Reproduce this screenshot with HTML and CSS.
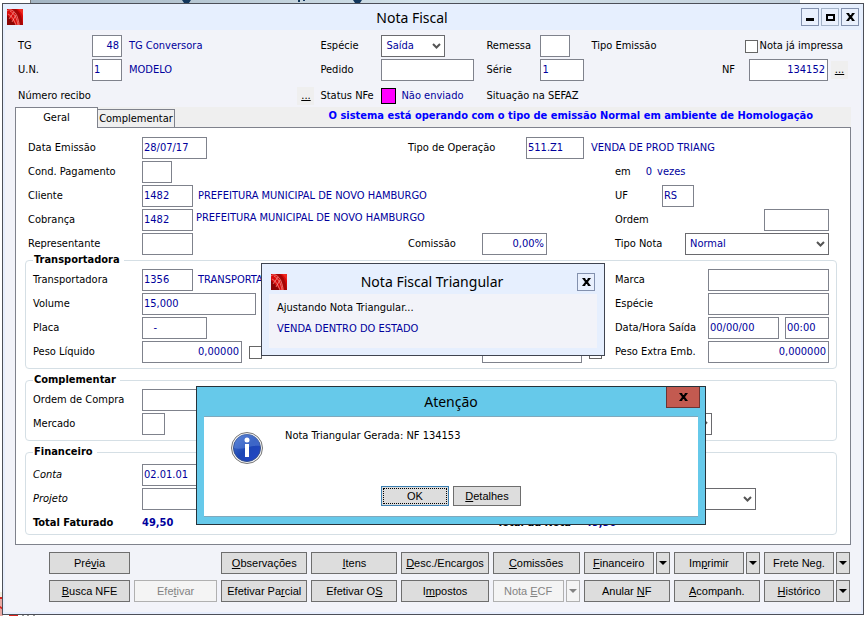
FILE: index.html
```
<!DOCTYPE html>
<html lang="pt-BR">
<head>
  <meta charset="UTF-8" />
  <meta name="viewport" content="width=device-width, initial-scale=1.0"/>
  <title>Nota Fiscal</title>
  <link rel="stylesheet" href="styles.css">
</head>
<body>

  <!-- Desktop behind the window -->
  <div class="desk-top" aria-hidden="true">
    <svg width="400" height="3"><path fill="#12365c" d="M151 0h9l-2 3h-5zM267 0h2v2h-2zM272 0h2v1h-2zM322 0h9l-2 3h-5z"/></svg>
  </div>
  <svg class="desk-logo" width="40" height="24" viewBox="0 0 40 24" aria-hidden="true">
    <path fill="#f3eee0" d="M0 0h3v5H0z"/>
    <path fill="#e8a9a4" d="M0 5h3v19H0z"/>
    <path fill="#d8231d" d="M0 5h3v2H0zM0 14l3 2v2l-3-2zM9 22h9v2H9z"/>
    <path fill="#9a9a9a" d="M22 22h2v2h-2zM27 22h2v2h-2zM33 22h2v2h-2z"/>
  </svg>

  <svg width="0" height="0" class="defs" aria-hidden="true">
    <symbol id="logo" viewBox="0 0 16 16">
      <path fill="#d90b0b" d="M0 0h16v16H0z"/>
      <path fill="#a60606" d="M9 0c4 3 6 8 7 16h-3C12 10 9 5 5 0z"/>
      <path fill="#8a0505" d="M0 6l9 10H0z"/>
      <path fill="#ee2a22" d="M11 0h5v7c-1-3-3-5-5-7z"/>
      <path fill="none" stroke="#f8b3ab" stroke-width=".6" d="M0 2c3-3 8 0 10 5 1 3 2 6 2 9M3 2c5 3 7 8 8 14M1 5c4 2 6 6 8 11M2 10l5-7M5 13l4-7"/>
    </symbol>
  </svg>

  <main class="window">
    <header class="titlebar">
      <svg class="logo"><use href="#logo"/></svg>
      <h1>Nota Fiscal</h1>
      <div class="win-buttons">
        <button aria-label="Minimizar"><svg width="10" height="10"><path d="M1 6h8v3H1z"/></svg></button>
        <button class="light" aria-label="Maximizar"><svg width="10" height="10"><path fill-rule="evenodd" d="M1 2h9v7H1zM3 4h5v3H3z"/></svg></button>
        <button aria-label="Fechar"><svg width="10" height="10"><path d="M1 1h3l1 2h1l1-2h3L7 5l3 4H7L6 7H5L4 9H1l3-4z"/></svg></button>
      </div>
    </header>

    <!-- Header fields -->
    <section class="head">
      <label for="tg">TG</label>
      <div class="cell"><input id="tg" class="w30 right" value="48"><output>TG Conversora</output></div>
      <label for="especie">Espécie</label>
      <div class="cell"><select id="especie" class="w64"><option>Saída</option></select></div>
      <label for="remessa">Remessa</label>
      <div class="cell"><input id="remessa" class="w30"></div>
      <div class="cell between"><span>Tipo Emissão</span><label class="check printed"><input type="checkbox">Nota já impressa</label></div>

      <label for="un">U.N.</label>
      <div class="cell"><input id="un" class="w30" value="1"><output>MODELO</output></div>
      <label for="pedido">Pedido</label>
      <div class="cell"><input id="pedido" class="w93"></div>
      <label for="serie">Série</label>
      <div class="cell"><input id="serie" class="w44" value="1"></div>
      <div class="cell nf"><label for="nf">NF</label><input id="nf" class="w79 right" value="134152"><button class="more" aria-label="Buscar NF">...</button></div>

      <span class="low">Número recibo</span>
      <div class="cell low end"><button class="more" aria-label="Buscar recibo">...</button></div>
      <span class="low">Status NFe</span>
      <div class="cell low"><i class="status"></i><output class="near">Não enviado</output></div>
      <span class="low sefaz">Situação na SEFAZ</span>
    </section>

    <!-- Tabs -->
    <div class="tabs">
      <button class="tab active">Geral</button>
      <button class="tab">Complementar</button>
      <strong class="notice">O sistema está operando com o tipo de emissão Normal em ambiente de Homologação</strong>
    </div>

    <form class="panel">
      <div class="rows plain">
        <label for="data">Data Emissão</label>
        <div class="cell"><input id="data" class="w65" value="28/07/17"></div>
        <label for="operacao">Tipo de Operação</label>
        <div class="cell wide oper"><input id="operacao" class="w58" value="511.Z1"><output>VENDA DE PROD TRIANG</output></div>

        <label for="cond">Cond. Pagamento</label>
        <div class="cell"><input id="cond" class="w30"></div>
        <span></span><span></span>
        <div class="cell times"><span>em</span><output>0</output><output>vezes</output></div>

        <label for="cliente">Cliente</label>
        <div class="cell"><input id="cliente" class="w51" value="1482"><output class="near">PREFEITURA MUNICIPAL DE NOVO HAMBURGO</output></div>
        <span></span><span></span>
        <div class="cell uf"><label for="uf">UF</label><input id="uf" class="w32" value="RS"></div>

        <label for="cobranca">Cobrança</label>
        <div class="cell"><input id="cobranca" class="w51" value="1482"><output class="close">PREFEITURA MUNICIPAL DE NOVO HAMBURGO</output></div>
        <span></span><span></span>
        <div class="cell between"><label for="ordem">Ordem</label><input id="ordem" class="w65"></div>

        <label for="repr">Representante</label>
        <div class="cell"><input id="repr" class="w51"></div>
        <label for="comissao">Comissão</label>
        <div class="cell"><input id="comissao" class="w65 right" value="0,00%"></div>
        <div class="cell between"><label for="tiponota">Tipo Nota</label><select id="tiponota" class="w144"><option>Normal</option></select></div>
      </div>

      <fieldset>
        <legend>Transportadora</legend>
        <div class="rows">
          <label for="transp">Transportadora</label>
          <div class="cell"><input id="transp" class="w51" value="1356"><output class="near">TRANSPORTADORA</output></div>
          <span></span><span></span>
          <div class="cell between"><label for="marca">Marca</label><input id="marca" class="w121"></div>

          <label for="volume">Volume</label>
          <div class="cell"><input id="volume" class="w114" value="15,000"></div>
          <span></span><span></span>
          <div class="cell between"><label for="especie2">Espécie</label><input id="especie2" class="w121"></div>

          <label for="placa">Placa</label>
          <div class="cell"><input id="placa" class="w65" value="   -"></div>
          <span></span><span></span>
          <div class="cell between">
            <label for="saida">Data/Hora Saída</label>
            <span class="pair"><input id="saida" class="w71" value="00/00/00"><input class="w44" value="00:00" aria-label="Hora saída"></span>
          </div>

          <label for="pesoliq">Peso Líquido</label>
          <div class="cell"><input id="pesoliq" class="w100 right" value="0,00000"><input type="checkbox" class="box" aria-label="Fixar peso líquido"></div>
          <label for="pesobruto">Peso Bruto</label>
          <div class="cell"><input id="pesobruto" class="w100 right" value="0,00000"><input type="checkbox" class="box" aria-label="Fixar peso bruto"></div>
          <div class="cell between"><label for="extra">Peso Extra Emb.</label><input id="extra" class="w121 right" value="0,000000"></div>
        </div>
      </fieldset>

      <fieldset>
        <legend>Complementar</legend>
        <div class="rows">
          <label for="compra">Ordem de Compra</label>
          <div class="cell"><input id="compra" class="w114"></div>
          <span></span><span></span><span></span>
          <label for="mercado">Mercado</label>
          <div class="cell"><input id="mercado" class="w23"></div>
          <span></span>
          <div class="cell wide"><select class="w230" aria-label="Tipo de mercado"><option></option></select></div>
        </div>
      </fieldset>

      <fieldset class="last">
        <legend>Financeiro</legend>
        <div class="rows">
          <label for="conta"><em>Conta</em></label>
          <div class="cell"><input id="conta" class="w114" value="02.01.01"></div>
          <span></span><span></span><span></span>
          <label for="projeto"><em>Projeto</em></label>
          <div class="cell"><input id="projeto" class="w114"></div>
          <span></span>
          <div class="cell wide"><select class="w274" aria-label="Projeto selecionado"><option></option></select></div>
          <b>Total Faturado</b>
          <output class="total">49,50</output>
          <div class="cell wide totals"><b>Total da Nota</b><output class="total">49,50</output></div>
        </div>
      </fieldset>
    </form>

    <!-- Action buttons -->
    <div class="actions">
      <button>Pré<u>v</u>ia</button>
      <span></span>
      <button><u>O</u>bservações</button>
      <button><u>I</u>tens</button>
      <button><u>D</u>esc./Encargos</button>
      <button><u>C</u>omissões</button>
      <div class="split"><button><u>F</u>inanceiro</button><button class="drop" aria-label="Mais opções de Financeiro"></button></div>
      <div class="split"><button>Im<u>p</u>rimir</button><button class="drop" aria-label="Mais opções de Imprimir"></button></div>
      <div class="split"><button>Frete Ne<u>g</u>.</button><button class="drop" aria-label="Mais opções de Frete"></button></div>

      <button><u>B</u>usca NFE</button>
      <button disabled>Efe<u>t</u>ivar</button>
      <button>Efetivar Pa<u>r</u>cial</button>
      <button>Efetivar O<u>S</u></button>
      <button>I<u>m</u>postos</button>
      <div class="split"><button disabled>Nota <u>E</u>CF</button><button class="drop" disabled aria-label="Mais opções de ECF"></button></div>
      <button>Anular <u>N</u>F</button>
      <button><u>A</u>companh.</button>
      <div class="split"><button><u>H</u>istórico</button><button class="drop" aria-label="Mais opções de Histórico"></button></div>
    </div>

    <!-- Progress window -->
    <section class="progress" role="dialog" aria-labelledby="progressTitle">
      <header>
        <svg class="logo"><use href="#logo"/></svg>
        <h2 id="progressTitle">Nota Fiscal Triangular</h2>
        <div class="win-buttons"><button aria-label="Fechar"><svg width="10" height="10"><path d="M1 1h3l1 2h1l1-2h3L7 5l3 4H7L6 7H5L4 9H1l3-4z"/></svg></button></div>
      </header>
      <div class="progress-body">
        <p>Ajustando Nota Triangular...</p>
        <p class="blue">VENDA DENTRO DO ESTADO</p>
      </div>
    </section>

    <!-- Alert -->
    <section class="alert" role="alertdialog" aria-labelledby="alertTitle">
      <header>
        <h2 id="alertTitle">Atenção</h2>
        <button class="close-red" aria-label="Fechar"><svg width="10" height="10"><path d="M1 1h3l1 2h1l1-2h3L7 5l3 4H7L6 7H5L4 9H1l3-4z"/></svg></button>
      </header>
      <div class="alert-body">
        <div class="message">
          <svg width="34" height="34" viewBox="0 0 34 34" aria-hidden="true">
            <defs>
              <linearGradient id="ball" x1="0" y1="0" x2="1" y2="1">
                <stop offset="0" stop-color="#4f7ad2"/>
                <stop offset="0.5" stop-color="#1c46b4"/>
                <stop offset="1" stop-color="#2546c8"/>
              </linearGradient>
            </defs>
            <circle cx="17" cy="17" r="15.5" fill="#f2f2f2" stroke="#777" stroke-width="1"/>
            <circle cx="17" cy="17" r="13.5" fill="url(#ball)" stroke="#33508f" stroke-width="1"/>
            <path fill="#6f95e0" opacity=".4" d="M4 17a13 13 0 0 1 26-2c-8-2-18 5-26 2z"/>
            <circle cx="17" cy="9" r="2.5" fill="#fff"/>
            <path fill="#fff" d="M15 13h4v13h-4z"/>
          </svg>
          <p>Nota Triangular Gerada: NF 134153</p>
        </div>
        <div class="alert-buttons">
          <button class="default">OK</button>
          <button><u>D</u>etalhes</button>
        </div>
      </div>
    </section>
  </main>

</body>
</html>
```
FILE: styles.css
```
* { box-sizing: border-box; margin: 0; padding: 0; }

body {
  font-family: "DejaVu Sans Condensed", "DejaVu Sans", sans-serif;
  font-size: 11px;
  line-height: 14px;
  color: #000;
  background: #fff;
  padding: 3px 1px 1px 2px;
  white-space: nowrap;
}

button, input, select { font: inherit; color: inherit; }

/* desktop behind the window */
.desk-top {
  position: absolute;
  top: 0;
  left: 30px;
  right: 65px;
  height: 3px;
  overflow: hidden;
  border-left: 1px solid #777;
  background: linear-gradient(to right, #a3b4c2, #d3e2ea 50%, #c5d2dd);
}

.desk-top svg { display: block; }

.desk-logo {
  position: absolute;
  left: 0;
  top: 592px;
}

.defs { position: absolute; }

/* window */
.window {
  position: relative;
  border: 1px solid #4c4f58;
  background: #f2f3f9;
  padding: 0 12px 12px;
  box-shadow: inset 0 0 0 2px #e7eefd;
}

.titlebar {
  display: flex;
  align-items: center;
  justify-content: space-between;
  height: 26px;
  margin: 0 -12px;
  padding: 0 4px;
  background: #e6effe;
}

h1, h2 {
  font-family: "Noto Sans", "Open Sans", sans-serif;
  font-weight: normal;
  font-size: 14px;
  line-height: 20px;
}

.titlebar h1 { padding-top: 2px; }

.logo {
  width: 16px;
  height: 16px;
}

.win-buttons {
  display: flex;
  gap: 2px;
}

.win-buttons button {
  display: flex;
  align-items: center;
  justify-content: center;
  width: 18px;
  height: 18px;
  border: 1px solid #8391ae;
  background: #e9f0fd;
}

.win-buttons .light { border-color: #a5b4c9; }

/* header fields */
.head {
  display: grid;
  grid-template-columns: 74px 228fr 61px 105px 54px 51px 259fr;
  grid-auto-rows: 22px;
  row-gap: 2px;
  align-items: center;
  padding: 5px 0 2px 3px;
}

.cell {
  display: flex;
  align-items: center;
  min-width: 0;
}

.between { justify-content: space-between; }
.end { justify-content: flex-end; padding-right: 6px; }
.low { margin-top: 4px; }
.printed { padding-right: 8px; }
.sefaz { grid-column: 5 / -1; }

.nf { justify-content: flex-end; padding-right: 3px; }
.nf input { margin: 0 3px 0 14px; }

output {
  color: #00009c;
  margin-left: 7px;
}

output.near { margin-left: 5px; }

output.close {
  margin-left: 3px;
  padding-bottom: 4px;
}

input, select {
  flex: none;
  height: 22px;
  padding: 0 2px 1px 1px;
  border: 1px solid #7f828c;
  border-radius: 0;
  background: #fff;
  color: #00009c;
}

select {
  appearance: none;
  padding-left: 4px;
  border-color: #6a6a6e;
  background: #fff url("data:image/svg+xml,%3Csvg xmlns='http://www.w3.org/2000/svg' width='9' height='7'%3E%3Cpath d='M1 1l3.5 3.5L8 1' fill='none' stroke='%23555' stroke-width='2'/%3E%3C/svg%3E") no-repeat right 3px center;
}

.right { text-align: right; }

input[type="checkbox"] {
  appearance: none;
  width: 13px;
  height: 13px;
  border-color: #666;
}

.box { margin-left: 7px; }

.check {
  display: flex;
  align-items: center;
  gap: 2px;
}

.more {
  width: 17px;
  height: 18px;
  border: none;
  background: #efefef;
  text-decoration: underline;
}

.status {
  width: 15px;
  height: 16px;
  border: 1px solid #000;
  background: #ff00ff;
}

/* field widths */
.w23 { width: 23px; }
.w30 { width: 30px; }
.w32 { width: 32px; }
.w44 { width: 44px; }
.w51 { width: 51px; }
.w58 { width: 58px; }
.w64 { width: 64px; }
.w65 { width: 65px; }
.w71 { width: 71px; }
.w79 { width: 79px; }
.w93 { width: 93px; }
.w100 { width: 100px; }
.w114 { width: 114px; }
.w121 { width: 121px; }
.w144 { width: 144px; }
.w230 { width: 230px; }
.w274 { width: 274px; }

/* tabs */
.tabs {
  display: flex;
  align-items: flex-end;
  height: 20px;
  background: #efefef;
}

.tab {
  width: 77px;
  height: 18px;
  border: 1px solid #7f828c;
  border-left: none;
  border-bottom: none;
  background: #efefef;
}

.tab.active {
  position: relative;
  z-index: 1;
  width: 83px;
  height: 21px;
  margin-bottom: -1px;
  border-left: 1px solid #7f828c;
  background: #fff;
}

.notice {
  flex: 1;
  padding: 0 38px 4px 0;
  text-align: right;
  color: #0000ff;
}

/* form */
.panel {
  border: 1px solid #7f828c;
  background: #fff;
  padding: 9px 13px 9px 9px;
}

.rows {
  display: grid;
  grid-template-columns: 109px 266fr 74px 133fr 214px;
  grid-auto-rows: 22px;
  row-gap: 2px;
  align-items: center;
}

.rows.plain {
  grid-template-columns: 114px 266fr 74px 133fr 214px;
  padding: 0 8px 0 3px;
}

.wide { grid-column: 4 / -1; }
.oper { padding-left: 44px; }
.times output { margin-left: 15px; }
.times output + output { margin-left: 5px; }
.uf input { margin-left: 34px; }
.pair { display: flex; gap: 6px; }

fieldset {
  border: 1px solid #d5dfe5;
  border-radius: 4px;
  margin: 0 0 6px;
  padding: 4px 7px 5px;
}

fieldset.last {
  margin-bottom: 0;
  padding: 7px 7px 0;
}

legend {
  font-weight: bold;
  line-height: 10px;
  padding: 0 4px 0 1px;
}

.total {
  margin-left: 0;
  font-weight: bold;
  color: #00009c;
}

.totals { padding-left: 15px; }
.totals .total { margin-left: 14px; }

/* action buttons */
.actions,
.alert-buttons {
  font-family: "Liberation Sans", Arial, sans-serif;
  font-size: 11px;
}

.actions {
  display: grid;
  grid-template-columns: 81fr 83fr 86fr 86fr 87fr 87fr 86fr 86fr 86fr;
  gap: 6px 4px;
  padding: 7px 1px 0 34px;
}

.actions button {
  min-width: 0;
  height: 22px;
  border: 1px solid #6e6e6e;
  background: #dddddd;
}

.split {
  display: flex;
  gap: 2px;
}

.split button:first-child { flex: 1; }

.actions .drop {
  display: flex;
  align-items: center;
  justify-content: center;
  width: 14px;
}

.drop::before {
  content: "";
  border: 4px solid transparent;
  border-top-color: currentColor;
  border-bottom: none;
}

.actions button:disabled {
  border-color: #b0b0b0;
  background: #f4f4f4;
  color: #838383;
}

/* progress window */
.progress {
  position: absolute;
  top: 259px;
  left: 258px;
  width: 344px;
  padding: 0 7px 7px;
  border: 1px solid #3f4450;
  background: #e6effe;
}

.progress header {
  display: flex;
  align-items: center;
  justify-content: space-between;
  height: 30px;
  padding: 6px 2px 0;
}

.progress-body {
  height: 54px;
  padding: 7px 8px;
  background: #f2f3f9;
}

.progress-body p + p { margin-top: 7px; }
.blue { color: #00009c; }

/* alert */
.alert {
  position: absolute;
  top: 382px;
  left: 193px;
  width: 510px;
  padding: 0 7px 7px;
  border: 1px solid #26323a;
  background: #66c9ea;
}

.alert header {
  display: grid;
  grid-template-columns: 34px 1fr 34px;
  height: 29px;
  margin: 0 -2px;
}

.alert h2 {
  grid-column: 2;
  padding-top: 5px;
  text-align: center;
}

.close-red {
  height: 21px;
  padding-top: 4px;
  border: 1px solid #6b3434;
  border-top: none;
  background: #c35a50;
}

.alert-body {
  padding: 12px 26px 10px;
  border: solid #7fa9bd;
  border-width: 1px 0;
  background: #fff;
}

.message {
  display: flex;
  align-items: flex-start;
  gap: 21px;
  height: 57px;
}

.message svg { margin-top: 2px; }

.alert-buttons {
  display: flex;
  justify-content: center;
  gap: 4px;
}

.alert-buttons button {
  width: 68px;
  height: 20px;
  border: 1px solid #6e6e6e;
  background: #dddddd;
}

.alert-buttons .default {
  border-color: #3c7fb1;
  outline: 1px dotted #000;
  outline-offset: -3px;
}
```
